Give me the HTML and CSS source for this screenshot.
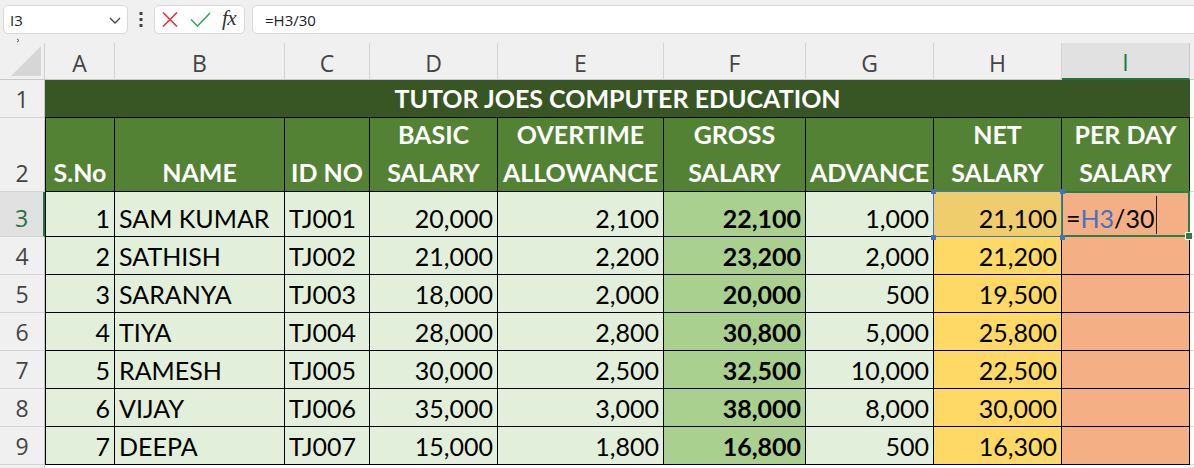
FILE: index.html
```html
<!DOCTYPE html>
<html>
<head>
<meta charset="utf-8">
<link rel="stylesheet" href="styles.css">
</head>
<body>
<div class="topbar">
  <div class="namebox">
    <span class="nb-text">I3</span>
    <svg class="chev" width="12" height="7" viewBox="0 0 12 7"><path d="M1 1 L6 6 L11 1" fill="none" stroke="#444" stroke-width="1.3"/></svg>
  </div>
  <div class="dots">
    <svg width="4" height="15" viewBox="0 0 4 15"><rect x="0.5" y="0" width="3" height="3" fill="#444"/><rect x="0.5" y="6" width="3" height="3" fill="#444"/><rect x="0.5" y="12" width="3" height="3" fill="#444"/></svg>
  </div>
  <div class="fxbox">
    <svg class="ic-x" width="16" height="15" viewBox="0 0 16 15"><path d="M1 0.5 L15 14.5 M15 0.5 L1 14.5" stroke="#e0383e" stroke-width="1.6" fill="none"/></svg>
    <svg class="ic-ok" width="21" height="15" viewBox="0 0 21 15"><path d="M1 7.5 L7.5 14 L20 1" stroke="#3aa55a" stroke-width="1.6" fill="none"/></svg>
    <span class="fx">fx</span>
  </div>
  <div class="formula">=H3/30</div>
  <svg class="tiny-arrow" width="5" height="5" viewBox="0 0 5 5"><path d="M1 1 L3 2.5 L1 4" stroke="#555" stroke-width="1" fill="none"/></svg>
</div>

<div class="sheet">
  <!-- column headers -->
  <div class="corner"><svg width="30" height="30" viewBox="0 0 30 30"><path d="M30 0 L30 30 L0 30 Z" fill="#d6d6d6"/></svg></div>
  <div class="ch">A</div>
  <div class="ch">B</div>
  <div class="ch">C</div>
  <div class="ch">D</div>
  <div class="ch">E</div>
  <div class="ch">F</div>
  <div class="ch">G</div>
  <div class="ch">H</div>
  <div class="ch sel">I</div>
  <div class="ch-rest"></div>

  <!-- row 1 -->
  <div class="rh">1</div>
  <div class="title">TUTOR JOES COMPUTER EDUCATION</div>
  <div class="x"></div>

  <!-- row 2 -->
  <div class="rh">2</div>
  <div class="hd a">S.No</div>
  <div class="hd">NAME</div>
  <div class="hd">ID NO</div>
  <div class="hd">BASIC<br>SALARY</div>
  <div class="hd">OVERTIME<br>ALLOWANCE</div>
  <div class="hd">GROSS<br>SALARY</div>
  <div class="hd">ADVANCE</div>
  <div class="hd">NET<br>SALARY</div>
  <div class="hd">PER DAY<br>SALARY</div>
  <div class="x"></div>

  <!-- row 3 -->
  <div class="rh sel">3</div>
  <div class="c r a">1</div>
  <div class="c">SAM KUMAR</div>
  <div class="c">TJ001</div>
  <div class="c r">20,000</div>
  <div class="c r">2,100</div>
  <div class="c r f">22,100</div>
  <div class="c r">1,000</div>
  <div class="c r h ref">21,100<span class="hdl tl"></span><span class="hdl tr"></span><span class="hdl bl"></span><span class="hdl br"></span></div>
  <div class="c i active"><span class="eq">=</span><span class="refc">H3</span><span>/30</span><span class="caret"></span><span class="fill"></span></div>
  <div class="x"></div>

  <!-- row 4 -->
  <div class="rh">4</div>
  <div class="c r a">2</div>
  <div class="c">SATHISH</div>
  <div class="c">TJ002</div>
  <div class="c r">21,000</div>
  <div class="c r">2,200</div>
  <div class="c r f">23,200</div>
  <div class="c r">2,000</div>
  <div class="c r h">21,200</div>
  <div class="c i"></div>
  <div class="x"></div>

  <!-- row 5 -->
  <div class="rh">5</div>
  <div class="c r a">3</div>
  <div class="c">SARANYA</div>
  <div class="c">TJ003</div>
  <div class="c r">18,000</div>
  <div class="c r">2,000</div>
  <div class="c r f">20,000</div>
  <div class="c r">500</div>
  <div class="c r h">19,500</div>
  <div class="c i"></div>
  <div class="x"></div>

  <!-- row 6 -->
  <div class="rh">6</div>
  <div class="c r a">4</div>
  <div class="c">TIYA</div>
  <div class="c">TJ004</div>
  <div class="c r">28,000</div>
  <div class="c r">2,800</div>
  <div class="c r f">30,800</div>
  <div class="c r">5,000</div>
  <div class="c r h">25,800</div>
  <div class="c i"></div>
  <div class="x"></div>

  <!-- row 7 -->
  <div class="rh">7</div>
  <div class="c r a">5</div>
  <div class="c">RAMESH</div>
  <div class="c">TJ005</div>
  <div class="c r">30,000</div>
  <div class="c r">2,500</div>
  <div class="c r f">32,500</div>
  <div class="c r">10,000</div>
  <div class="c r h">22,500</div>
  <div class="c i"></div>
  <div class="x"></div>

  <!-- row 8 -->
  <div class="rh">8</div>
  <div class="c r a">6</div>
  <div class="c">VIJAY</div>
  <div class="c">TJ006</div>
  <div class="c r">35,000</div>
  <div class="c r">3,000</div>
  <div class="c r f">38,000</div>
  <div class="c r">8,000</div>
  <div class="c r h">30,000</div>
  <div class="c i"></div>
  <div class="x"></div>

  <!-- row 9 -->
  <div class="rh">9</div>
  <div class="c r a">7</div>
  <div class="c">DEEPA</div>
  <div class="c">TJ007</div>
  <div class="c r">15,000</div>
  <div class="c r">1,800</div>
  <div class="c r f">16,800</div>
  <div class="c r">500</div>
  <div class="c r h">16,300</div>
  <div class="c i"></div>
  <div class="x"></div>

  <!-- row 10 (partial) -->
  <div class="rh last"></div>
  <div class="blank span9"></div>
  <div class="x"></div>
</div>
</body>
</html>
```

FILE: styles.css
```css
html, body {
  margin: 0;
  padding: 0;
}
body {
  width: 1194px;
  height: 468px;
  overflow: hidden;
  background: #ffffff;
  font-family: Lato, "Open Sans", sans-serif;
}

/* ---------- formula bar ---------- */
.topbar {
  position: relative;
  height: 43px;
  box-sizing: border-box;
  padding-top: 5px;
  background: #f0f0f0;
  display: flex;
  align-items: flex-start;
  font-family: "Open Sans", "Noto Sans", sans-serif;
}
.namebox {
  margin-left: 3px;
  width: 125px;
  height: 29px;
  box-sizing: border-box;
  background: #fff;
  border: 1px solid #d9d9d9;
  border-radius: 5px;
  display: flex;
  align-items: center;
  justify-content: space-between;
  padding: 0 6px 0 6px;
}
.nb-text {
  font-size: 15px;
  color: #222;
}
.chev {
  margin-top: 1px;
}
.dots {
  width: 26px;
  height: 29px;
  display: flex;
  align-items: center;
  justify-content: center;
}
.fxbox {
  width: 91px;
  height: 29px;
  box-sizing: border-box;
  background: #fff;
  border: 1px solid #d9d9d9;
  border-radius: 5px;
  display: flex;
  align-items: center;
  padding-left: 7px;
}
.ic-x {
  margin-right: 12px;
}
.ic-ok {
  margin-right: 11px;
}
.fx {
  font-family: "Liberation Serif", "DejaVu Serif", serif;
  font-style: italic;
  font-size: 21px;
  color: #333;
  letter-spacing: -0.5px;
  margin-top: -3px;
}
.formula {
  margin-left: 7px;
  flex: 1;
  margin-right: -20px;
  height: 29px;
  box-sizing: border-box;
  background: #fff;
  border: 1px solid #d9d9d9;
  border-radius: 5px;
  padding-left: 12px;
  display: flex;
  align-items: center;
  font-size: 15px;
  color: #222;
}
.tiny-arrow {
  position: absolute;
  left: 16px;
  top: 38px;
}

/* ---------- sheet ---------- */
.sheet {
  display: grid;
  grid-template-columns: 45px 70px 170px 85px 128px 166px 142px 128px 128px 128px 1fr;
  grid-template-rows: 37px 38px 74px 45px repeat(6, 38px) 1fr;
  height: 425px;
}
.sheet > div {
  box-sizing: border-box;
  min-width: 0;
}
.corner {
  background: #f0f0f0;
  border-right: 1px solid #d0d0d0;
  border-bottom: 1px solid #c8c8c8;
  display: flex;
  align-items: flex-end;
  justify-content: flex-end;
  padding: 0 3px 3px 0;
}
.ch {
  background: #f0f0f0;
  border-right: 1px solid #d4d4d4;
  border-bottom: 1px solid #c8c8c8;
  display: flex;
  align-items: flex-end;
  justify-content: center;
  padding-bottom: 1px;
  font-family: "Open Sans", "Noto Sans", sans-serif;
  font-size: 23px;
  line-height: 30px;
  color: #444;
}
.ch.sel {
  background: #e1e1e1;
  color: #217346;
  border-bottom: 2px solid #217346;
  border-right: 1px solid #c8c8c8;
}
.ch-rest {
  background: #f0f0f0;
  border-bottom: 1px solid #c8c8c8;
}
.rh {
  background: #f0f0f0;
  border-right: 1px solid #c8c8c8;
  border-bottom: 1px solid #d4d4d4;
  display: flex;
  align-items: flex-end;
  justify-content: center;
  padding-bottom: 3px;
  font-family: "Open Sans", "Noto Sans", sans-serif;
  font-size: 23px;
  line-height: 30px;
  color: #444;
}
.rh.sel {
  background: #e1e1e1;
  color: #217346;
  border-right: 2px solid #217346;
}
.rh.last {
  border-bottom: none;
}
.x {
  background: #fff;
  border-bottom: 1px solid #d9d9d9;
}
.blank {
  background: #fff;
}
.span9 {
  grid-column: span 9;
}

.title {
  grid-column: span 9;
  background: #375623;
  color: #fff;
  font-weight: 700;
  font-size: 25px;
  line-height: 30px;
  border-bottom: 1px solid #000;
  display: flex;
  align-items: flex-end;
  justify-content: center;
  padding-bottom: 4px;
  white-space: nowrap;
}

.hd {
  background: #548235;
  color: #fff;
  font-weight: 700;
  font-size: 25px;
  line-height: 38px;
  text-align: center;
  border-right: 1px solid #000;
  border-bottom: 1px solid #000;
  display: flex;
  flex-direction: column;
  justify-content: flex-end;
  white-space: nowrap;
}

.c {
  position: relative;
  background: #e2efda;
  color: #000;
  font-size: 25px;
  line-height: 30px;
  border-right: 1px solid #000;
  border-bottom: 1px solid #000;
  display: flex;
  align-items: flex-end;
  padding: 0 4px 3px 4px;
  white-space: nowrap;
}
.a {
  border-left: 1px solid #000;
}
.r {
  justify-content: flex-end;
}
.f {
  background: #a9d08e;
  font-weight: 700;
}
.h {
  background: #ffd966;
}
.i {
  background: #f4b084;
}

/* reference highlight on H3 */
.ref {
  background: #efcd6c;
}
.ref::after {
  content: "";
  position: absolute;
  left: -1px;
  top: -1px;
  right: -1px;
  bottom: -1px;
  border: 1px solid #4472c4;
  pointer-events: none;
  z-index: 4;
}
.hdl {
  position: absolute;
  width: 5px;
  height: 5px;
  background: #4472c4;
  z-index: 5;
}
.hdl.tl { left: -3px; top: -3px; }
.hdl.tr { right: -4px; top: -3px; }
.hdl.bl { left: -3px; bottom: -4px; }
.hdl.br { right: -4px; bottom: -4px; }

/* active cell I3 */
.active {
  padding-left: 4px;
}
.active::after {
  content: "";
  position: absolute;
  left: -1px;
  top: -1px;
  right: -1px;
  bottom: -1px;
  border: 2px solid #2e7d46;
  pointer-events: none;
  z-index: 3;
}
.refc {
  color: #4472c4;
}
.caret {
  display: inline-block;
  width: 1px;
  height: 38px;
  background: #222;
  margin-left: 2px;
  margin-bottom: -1px;
}
.fill {
  position: absolute;
  right: -4px;
  bottom: -4px;
  width: 6px;
  height: 6px;
  background: #2e7d46;
  border: 1px solid #fff;
  z-index: 6;
}
```
